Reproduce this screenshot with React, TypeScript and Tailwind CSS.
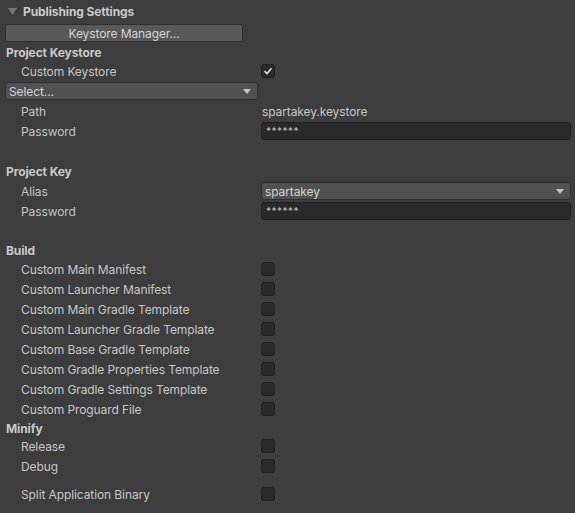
const font = { fontFamily: "Inter, 'Noto Sans', sans-serif" };

function Check({ on = false }: { on?: boolean }) {
  return (
    <div className="w-[14px] h-[14px] rounded-[3px] bg-[#2a2a2a] border border-[#212121] flex items-center justify-center">
      {on && (
        <svg width="10" height="10" viewBox="0 0 10 10">
          <path d="M1.5 5.2 L4 7.5 L8.5 2.3" fill="none" stroke="#e4e4e4" strokeWidth="1.6" />
        </svg>
      )}
    </div>
  );
}

function Arrow() {
  return (
    <svg width="8" height="5" viewBox="0 0 8 5">
      <path d="M0 0 H8 L4 5 Z" fill="#c4c4c4" />
    </svg>
  );
}

function Header({ text, h = "h-5" }: { text: string; h?: string }) {
  return (
    <div className={`${h} flex items-center pl-[6px] font-bold text-[#c8c8c8]`}>
      <span className="pt-[2px] leading-[14px] whitespace-nowrap">{text}</span>
    </div>
  );
}

function Label({ text }: { text: string }) {
  return <div className="w-[261px] shrink-0 pl-[21px] pt-[2px] leading-[14px] whitespace-nowrap">{text}</div>;
}

function ToggleRow({ text, on = false }: { text: string; on?: boolean }) {
  return (
    <div className="h-5 flex items-center">
      <Label text={text} />
      <Check on={on} />
    </div>
  );
}

function PasswordField() {
  return (
    <div className="flex-1 h-[18px] rounded-[3px] bg-[#2a2a2a] border border-[#212121] flex items-center pl-[4px] text-[10px] tracking-[0.5px] text-[#bdbdbd]">
      ******
    </div>
  );
}

const buildItems = [
  "Custom Main Manifest",
  "Custom Launcher Manifest",
  "Custom Main Gradle Template",
  "Custom Launcher Gradle Template",
  "Custom Base Gradle Template",
  "Custom Gradle Properties Template",
  "Custom Gradle Settings Template",
  "Custom Proguard File",
];

export default function App() {
  return (
    <div style={font} className="w-[575px] h-[513px] bg-[#3e3e3e] text-[#c4c4c4] text-[12px] tracking-[-0.1px] leading-none overflow-hidden flex flex-col">
      {/* foldout */}
      <div className="h-[22px] flex items-center pl-[8px] gap-[6px] font-bold text-[#c8c8c8]">
        <svg width="9" height="7" viewBox="0 0 9 7">
          <path d="M0 0 H9 L4.5 7 Z" fill="#767676" />
        </svg>
        <span className="pt-[2px] leading-[14px]">Publishing Settings</span>
      </div>

      <div className="h-[21px] pt-[2px] pl-[5px]">
        <button className="w-[238px] h-[18px] rounded-[3px] bg-[#585858] border border-[#303030] text-[#d2d2d2] flex items-center justify-center">
          <span className="pt-[1px] leading-[14px]">Keystore Manager...</span>
        </button>
      </div>

      <Header text="Project Keystore" h="h-[18px]" />
      <ToggleRow text="Custom Keystore" on />

      <div className="h-5 pt-[1px] pl-[5px]">
        <div className="w-[253px] h-[18px] rounded-[3px] bg-[#515151] border border-[#303030] flex items-center justify-between pl-[3px] pr-[6px] text-[#d2d2d2]">
          <span className="pt-[1px] leading-[14px]">Select...</span>
          <Arrow />
        </div>
      </div>

      <div className="h-5 flex items-center pr-[4px]">
        <Label text="Path" />
        <span className="pl-[1px] pt-[2px] leading-[14px]">spartakey.keystore</span>
      </div>
      <div className="h-5 flex items-center pr-[4px]">
        <Label text="Password" />
        <PasswordField />
      </div>

      <div className="h-5" />

      <Header text="Project Key" />
      <div className="h-5 flex items-center pr-[4px]">
        <Label text="Alias" />
        <div className="flex-1 h-[18px] rounded-[3px] bg-[#515151] border border-[#303030] flex items-center justify-between pl-[3px] pr-[6px] text-[#d2d2d2]">
          <span className="pt-[1px] leading-[14px]">spartakey</span>
          <Arrow />
        </div>
      </div>
      <div className="h-5 flex items-center pr-[4px]">
        <Label text="Password" />
        <PasswordField />
      </div>

      <div className="h-5" />

      <Header text="Build" h="h-[18px]" />
      {buildItems.map((t) => (
        <ToggleRow key={t} text={t} />
      ))}

      <Header text="Minify" h="h-[17px]" />
      <ToggleRow text="Release" />
      <ToggleRow text="Debug" />

      <div className="h-2" />
      <ToggleRow text="Split Application Binary" />
    </div>
  );
}
